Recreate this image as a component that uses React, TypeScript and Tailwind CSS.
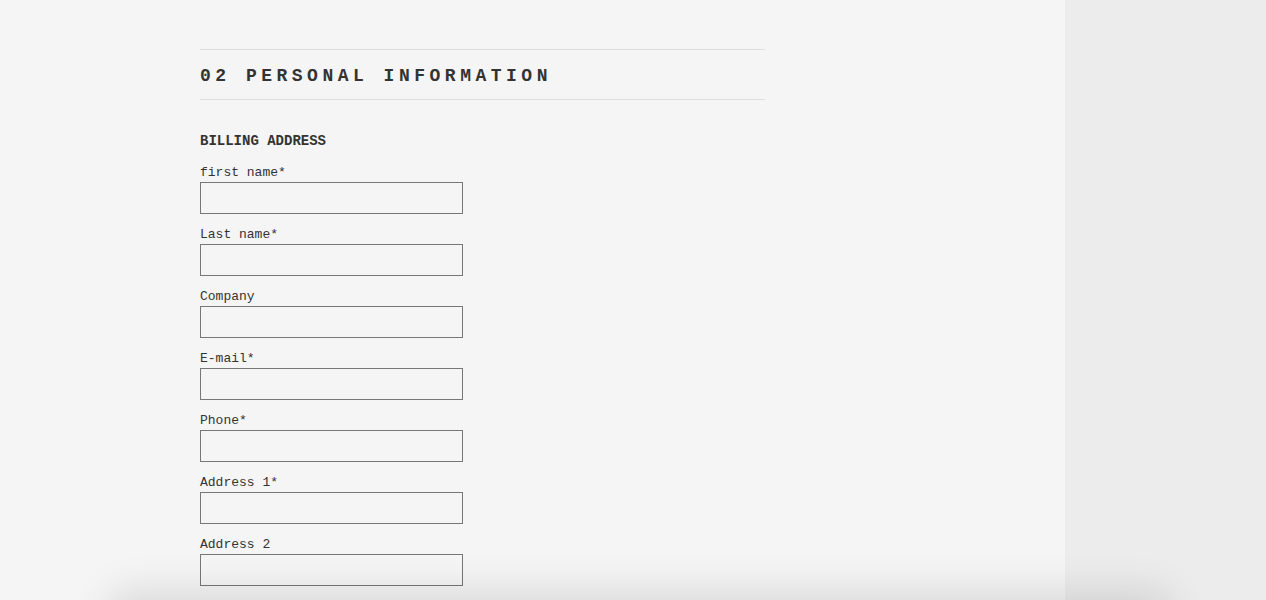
const fields = [
  { label: "first name*" },
  { label: "Last name*" },
  { label: "Company" },
  { label: "E-mail*" },
  { label: "Phone*" },
  { label: "Address 1*" },
  { label: "Address 2" },
];

const Field = ({ label }: { label: string }) => {
  return (
    <div className="flex flex-col mb-[12px]">
      <label className="text-[13px] leading-[18px] text-[#333]">{label}</label>
      <input
        type="text"
        className="w-[263px] h-[32px] border border-[#777] bg-transparent outline-none px-2"
      />
    </div>
  );
};

export default function App() {
  return (
    <div
      className="relative flex h-[600px] w-full overflow-hidden bg-[#ececec]"
      style={{ fontFamily: '"Liberation Mono", "DejaVu Sans Mono", monospace' }}
    >
      <main className="w-[1065px] shrink-0 bg-[#f5f5f5] pl-[200px] pt-[49px]">
        <div className="w-[565px]">
          <div className="flex h-[51px] items-center border-y border-[#dedede] pt-[4px]">
            <h2 className="text-[18px] tracking-[0.25em] text-[#333] font-bold">02 PERSONAL INFORMATION</h2>
          </div>

          <h3 className="mt-[31px] mb-[13px] text-[14px] leading-[20px] font-bold text-[#333]">BILLING ADDRESS</h3>

          <form>
            {fields.map((f) => (
              <Field key={f.label} label={f.label} />
            ))}
          </form>
        </div>
      </main>
      <aside className="flex-1 bg-[#ececec]" />

      <div className="absolute left-[110px] top-[600px] h-[80px] w-[1060px] rounded-t-[12px] bg-[#f0f0f0] shadow-[0_-8px_40px_rgba(0,0,0,0.12)]" />
    </div>
  );
}
